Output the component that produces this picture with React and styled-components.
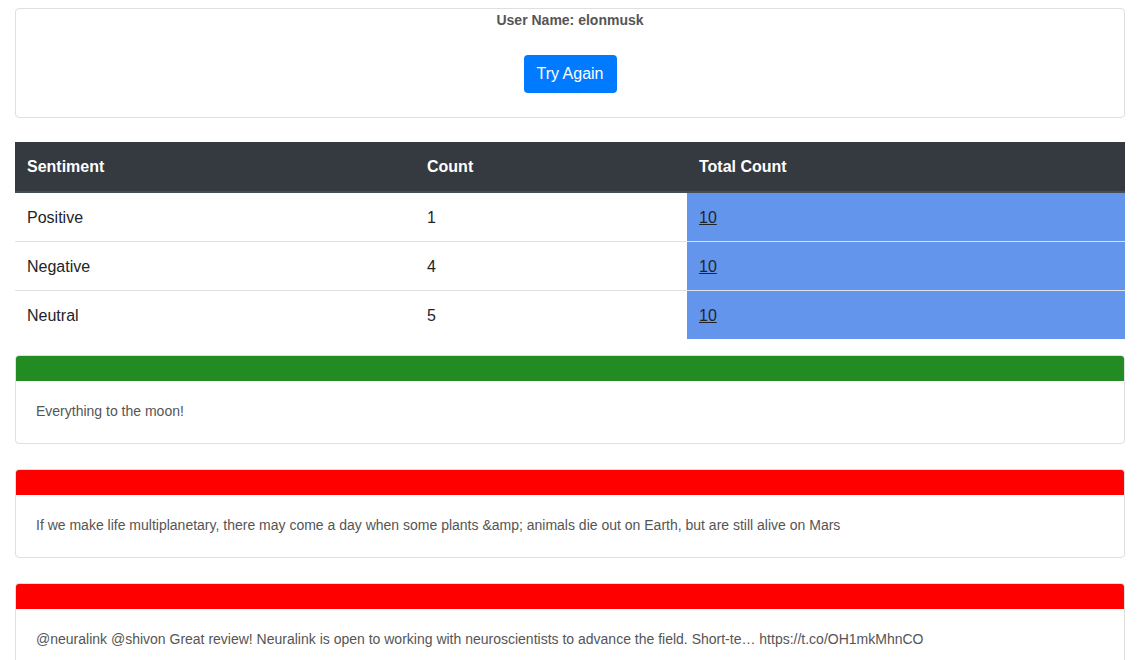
import React from 'react'
import styled, { createGlobalStyle } from 'styled-components'

const GlobalStyle = createGlobalStyle`
  body {
    margin: 0;
    background: #fff;
    font-family: "Liberation Sans", Arial, sans-serif;
    color: #212529;
  }
`

const Container = styled.div`
  padding: 8px 15px 0;
`

const InfoBox = styled.div`
  border: 1px solid #dfdfdf;
  border-radius: 4px;
  height: 108px;
  display: flex;
  flex-direction: column;
  align-items: center;
  margin-bottom: 24px;
`

const UserName = styled.div`
  margin-top: 3px;
  font-size: 14px;
  font-weight: bold;
  color: #555;
`

const Button = styled.button`
  margin-top: 27px;
  background: #007bff;
  color: #fff;
  border: none;
  border-radius: 4px;
  height: 38px;
  padding: 0 13px;
  font-family: inherit;
  font-size: 16px;
`

const Table = styled.table`
  width: 100%;
  table-layout: fixed;
  border-collapse: collapse;
  margin-bottom: 16px;
`

const HeadCell = styled.th`
  background: #343a40;
  color: #fff;
  text-align: left;
  font-size: 16px;
  font-weight: bold;
  height: 48px;
  padding: 1px 12px 0;
  border-bottom: 2px solid #454d55;
`

const Cell = styled.td`
  height: 47px;
  padding: 1px 12px 0;
  font-size: 16px;
  border-top: ${ props => props.first ? 'none' : '1px solid #dee2e6' };
  background: ${ props => props.blue ? '#6495ed' : 'transparent' };
  a { color: #212529; }
`

const Card = styled.div`
  border: 1px solid #dfdfdf;
  border-radius: 4px;
  margin-bottom: 25px;
  overflow: hidden;
`

const CardHeader = styled.div`
  height: 25px;
  background: ${ props => props.color };
`

const CardBody = styled.div`
  padding: 20px 20px 21px;
  font-size: 14px;
  line-height: 21px;
  color: #555;
`

const rows = [
  { name: 'Positive', count: 1 },
  { name: 'Negative', count: 4 },
  { name: 'Neutral', count: 5 },
]

const tweets = [
  { color: '#228b22', text: 'Everything to the moon!' },
  { color: '#ff0000', text: 'If we make life multiplanetary, there may come a day when some plants &amp; animals die out on Earth, but are still alive on Mars' },
  { color: '#ff0000', text: '@neuralink @shivon Great review! Neuralink is open to working with neuroscientists to advance the field. Short-te\u2026 https://t.co/OH1mkMhnCO' },
]

const App = () => (
  <Container>
    <GlobalStyle />
    <InfoBox>
      <UserName>User Name: elonmusk</UserName>
      <Button>Try Again</Button>
    </InfoBox>
    <Table>
      <colgroup>
        <col style={{ width: 400 }} />
        <col style={{ width: 272 }} />
        <col />
      </colgroup>
      <thead>
        <tr>
          <HeadCell>Sentiment</HeadCell>
          <HeadCell>Count</HeadCell>
          <HeadCell>Total Count</HeadCell>
        </tr>
      </thead>
      <tbody>
        { rows.map( ( r, i ) => (
          <tr key={ r.name }>
            <Cell first={ i === 0 }>{ r.name }</Cell>
            <Cell first={ i === 0 }>{ r.count }</Cell>
            <Cell first={ i === 0 } blue><a href='#'>10</a></Cell>
          </tr>
        ) ) }
      </tbody>
    </Table>
    { tweets.map( ( t, i ) => (
      <Card key={ i }>
        <CardHeader color={ t.color } />
        <CardBody>{ t.text }</CardBody>
      </Card>
    ) ) }
  </Container>
)

export default App
